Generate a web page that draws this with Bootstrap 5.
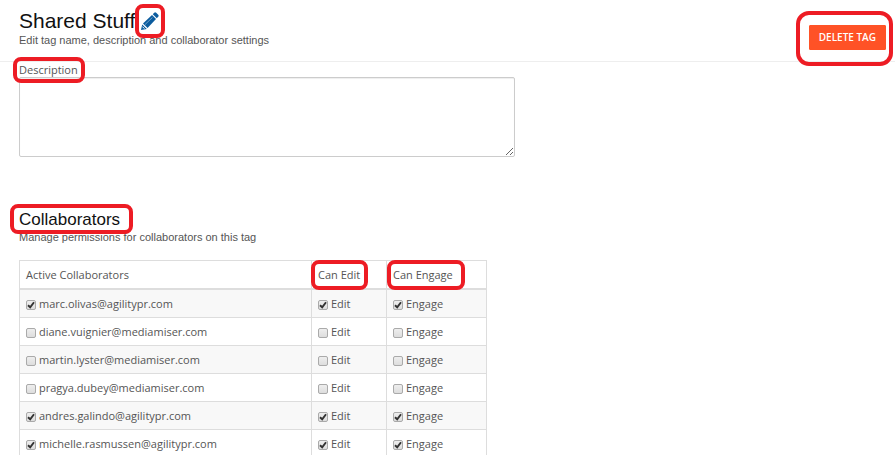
<!DOCTYPE html>
<html lang="en">
<head>
<meta charset="utf-8">
<meta name="viewport" content="width=device-width, initial-scale=1">
<title>Shared Stuff</title>
<link href="https://cdn.jsdelivr.net/npm/bootstrap@5.3.0/dist/css/bootstrap.min.css" rel="stylesheet">
<style>
body { font: 11px/18px "Open Sans", sans-serif; color: #555; background: #fff; }
.page-head { padding: 9px 9px 11px 19px; border-bottom: 1px solid #eee; }
.page-title, .section-title, .sub { font-family: "Liberation Sans", Arial, sans-serif; }
.page-title { font-size: 21px; line-height: 24px; font-weight: 400; color: #111; }
.section-title { font-size: 17px; line-height: 20px; font-weight: 400; color: #111; }
.sub { font-size: 11px; line-height: 14px; }
.page-body { padding: 0 19px; }

/* red marker drawn over the highlighted item */
.marked { position: relative; }
.marked::after { content: ""; position: absolute; inset: -5px -9px; border: 4px solid #ed1c24; border-radius: 8px; pointer-events: none; z-index: 1; }
.mark-pencil::after { inset: -8px -6px; }
.mark-label::after { inset: -5px -7px -6px -6px; }
.mark-button::after { inset: -14px -7px -16px -13px; border-radius: 13px; }
.mark-title::after { inset: -6px -13px -4px -9px; }
.mark-cell::after { inset: -6px -8px -6px -7px; }
.mark-wide::after { inset: -6px -12px -6px -6px; }

.pencil { width: 18px; height: 18px; line-height: 0; margin-left: 6px; }
.btn-delete { --bs-btn-color: #fff; --bs-btn-bg: #ff5226; --bs-btn-border-color: #ff5226; --bs-btn-hover-color: #fff; --bs-btn-hover-bg: #e64418; --bs-btn-hover-border-color: #e64418;
  --bs-btn-padding-x: 9px; --bs-btn-padding-y: 3px; --bs-btn-font-size: 10px; --bs-btn-font-weight: 600; --bs-btn-line-height: 17px; --bs-btn-border-radius: 1px; }
.label-line { line-height: 15px; }
.desc { max-width: 496px; height: 80px; min-height: 0; border: 1px solid #ccc; border-radius: 2px; font-size: 11px; padding: 4px 6px; box-shadow: inset 0 1px 1px #eee; }
.collaborators { margin-top: 53px; }
.people { max-width: 468px; table-layout: fixed; color: inherit; --bs-table-color: #555; --bs-table-striped-color: #555; --bs-table-striped-bg: #f8f8f8; border-color: #ddd; }
.people th { font-weight: 400; }
.people > :not(caption) > * > * { padding: 5px 6px 4px; line-height: 18px; }
.people > thead > tr > th { border-bottom-width: 2px; }
.c-edit { width: 75px; }
.c-engage { width: 100px; }
.tick { appearance: none; flex: none; width: 10px; height: 10px; margin: 1px 0 0; border: 1px solid #aaa; border-radius: 2px; background: linear-gradient(#eee, #ddd); }
.tick:checked { background: url("data:image/svg+xml,%3Csvg xmlns='http://www.w3.org/2000/svg' viewBox='0 0 8 8'%3E%3Cpath d='M1 4.2 3.2 6.3 7 1.2' fill='none' stroke='%23333' stroke-width='1.9'/%3E%3C/svg%3E") center / 8px 8px no-repeat, linear-gradient(#eee, #ddd); }
.pick { gap: 3px; }
</style>
<script src="https://cdn.jsdelivr.net/npm/bootstrap@5.3.0/dist/js/bootstrap.bundle.min.js" defer></script>
</head>
<body>
<header class="page-head d-flex justify-content-between align-items-start">
  <div>
    <div class="d-flex align-items-center">
      <h1 class="page-title mb-0">Shared Stuff</h1>
      <button type="button" class="btn p-0 border-0 pencil marked mark-pencil" aria-label="Edit tag name">
        <svg width="18" height="18" viewBox="0 0 18 18" aria-hidden="true"><g fill="#0b5c9e"><path d="M0 18 1.2 12.4 5.8 17z"/><path d="M2 11.5 11 3 15 7 6.6 16z"/><path d="M11.8 2.2 13.2.8q1-.9 2 0l2 2q.9 1 0 2l-1.4 1.4z"/></g><path d="M4 12.6 11.5 5.4" stroke="#8ab4d6" stroke-width=".8"/><path d="m1.4 14.6 2 2" stroke="#fff" stroke-width="1"/></svg>
      </button>
    </div>
    <p class="sub mb-0">Edit tag name, description and collaborator settings</p>
  </div>
  <div class="marked mark-button mt-3 lh-1"><button type="button" class="btn btn-delete">DELETE TAG</button></div>
</header>
<main class="page-body">
  <label for="description" class="label-line marked mark-label d-table">Description</label>
  <textarea id="description" class="form-control desc"></textarea>

  <section class="collaborators">
    <h2 class="section-title marked mark-title d-table mb-0">Collaborators</h2>
    <p class="sub mb-3">Manage permissions for collaborators on this tag</p>
    <table class="table table-bordered table-striped people mb-0">
      <colgroup><col><col class="c-edit"><col class="c-engage"></colgroup>
      <thead><tr>
        <th scope="col">Active Collaborators</th>
        <th scope="col"><span class="marked mark-cell d-inline-block">Can Edit</span></th>
        <th scope="col"><span class="marked mark-wide d-inline-block">Can Engage</span></th>
      </tr></thead>
      <tbody>
        <tr><td><label class="pick d-flex align-items-center"><input class="tick" type="checkbox" checked>marc.olivas@agilitypr.com</label></td><td><label class="pick d-flex align-items-center"><input class="tick" type="checkbox" checked>Edit</label></td><td><label class="pick d-flex align-items-center"><input class="tick" type="checkbox" checked>Engage</label></td></tr>
        <tr><td><label class="pick d-flex align-items-center"><input class="tick" type="checkbox">diane.vuignier@mediamiser.com</label></td><td><label class="pick d-flex align-items-center"><input class="tick" type="checkbox">Edit</label></td><td><label class="pick d-flex align-items-center"><input class="tick" type="checkbox">Engage</label></td></tr>
        <tr><td><label class="pick d-flex align-items-center"><input class="tick" type="checkbox">martin.lyster@mediamiser.com</label></td><td><label class="pick d-flex align-items-center"><input class="tick" type="checkbox">Edit</label></td><td><label class="pick d-flex align-items-center"><input class="tick" type="checkbox">Engage</label></td></tr>
        <tr><td><label class="pick d-flex align-items-center"><input class="tick" type="checkbox">pragya.dubey@mediamiser.com</label></td><td><label class="pick d-flex align-items-center"><input class="tick" type="checkbox">Edit</label></td><td><label class="pick d-flex align-items-center"><input class="tick" type="checkbox">Engage</label></td></tr>
        <tr><td><label class="pick d-flex align-items-center"><input class="tick" type="checkbox" checked>andres.galindo@agilitypr.com</label></td><td><label class="pick d-flex align-items-center"><input class="tick" type="checkbox" checked>Edit</label></td><td><label class="pick d-flex align-items-center"><input class="tick" type="checkbox" checked>Engage</label></td></tr>
        <tr><td><label class="pick d-flex align-items-center"><input class="tick" type="checkbox" checked>michelle.rasmussen@agilitypr.com</label></td><td><label class="pick d-flex align-items-center"><input class="tick" type="checkbox" checked>Edit</label></td><td><label class="pick d-flex align-items-center"><input class="tick" type="checkbox" checked>Engage</label></td></tr>
      </tbody>
    </table>
  </section>
</main>
</body>
</html>
